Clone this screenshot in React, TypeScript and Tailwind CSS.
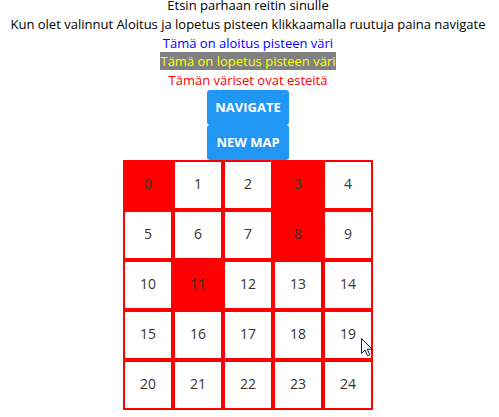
import React from "react";

const BLOCKED = [0, 3, 8, 11];

export default function App() {
  return (
    <div className="relative w-[499px] h-[417px] overflow-hidden bg-white">
      <div className="flex flex-col items-center -mt-[4px] pr-[3px] font-['Open_Sans',sans-serif] text-[13px] leading-[18.75px] text-black">
        <div>Etsin parhaan reitin sinulle</div>
        <div>Kun olet valinnut Aloitus ja lopetus pisteen klikkaamalla ruutuja paina navigate</div>
        <div className="text-[#0000ff]">Tämä on aloitus pisteen väri</div>
        <div>
          <span className="bg-[#808080] text-[#ffff00]">Tämä on lopetus pisteen väri</span>
        </div>
        <div className="text-[#ff0000]">Tämän väriset ovat esteitä</div>

        <div className="flex flex-col">
          <button className="h-[35px] w-[82px] rounded-[3px] bg-[#2196f3] text-[13px] font-bold text-white">
            NAVIGATE
          </button>
          <button className="h-[35px] w-[82px] rounded-[3px] bg-[#2196f3] text-[13px] font-bold text-white">
            NEW MAP
          </button>
        </div>

        <div className="grid w-[250px] grid-cols-5">
          {Array.from({ length: 25 }, (_, i) => (
            <div
              key={i}
              className={
                "flex h-[50px] w-[50px] items-center justify-center border-2 border-[#ff0000] text-[14px] text-[#333333] " +
                (BLOCKED.includes(i) ? "bg-[#ff0000]" : "bg-white")
              }
            >
              {i}
            </div>
          ))}
        </div>
      </div>

      {/* mouse pointer */}
      <svg className="absolute left-[361px] top-[338px]" width="13" height="19" viewBox="0 0 13 19">
        <path d="M0.5 0.5 L0.5 15.5 L4 12 L6.5 17.8 L8.8 16.8 L6.3 11.2 L11 11.2 Z" fill="white" stroke="#1a1a40" strokeWidth="1" />
      </svg>
    </div>
  );
}
